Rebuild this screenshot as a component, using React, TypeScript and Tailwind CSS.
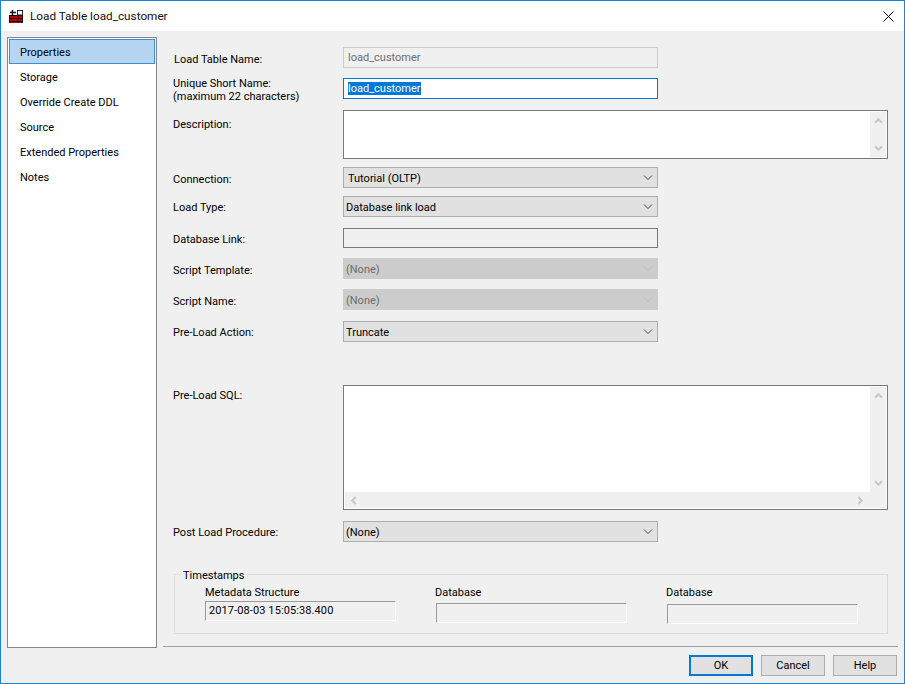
import React from 'react'

const navItems = ['Storage', 'Override Create DDL', 'Source', 'Extended Properties', 'Notes']

function Chevron({ className, dir = 'down', thick }: { className: string; dir?: 'up' | 'down' | 'left' | 'right'; thick?: boolean }) {
  const points = {
    down: '1,1.5 5,5.5 9,1.5',
    up: '1,5.5 5,1.5 9,5.5',
    left: '5.5,1 1.5,5 5.5,9',
    right: '1.5,1 5.5,5 1.5,9',
  }[dir]
  const box = dir === 'up' || dir === 'down' ? '0 0 10 7' : '0 0 7 10'
  return (
    <svg viewBox={box} className={className} fill="none" stroke="currentColor" strokeWidth={thick ? 2.4 : 1}>
      <polyline points={points} />
    </svg>
  )
}

function Combo({ value, disabled, inset }: { value: string; disabled?: boolean; inset?: boolean }) {
  return (
    <div
      className={
        disabled
          ? 'flex h-[21px] w-[315px] items-center justify-between border border-[#cccccc] bg-[#cccccc] pl-[2px] pr-[3px] text-[#6d6d6d]'
          : 'flex h-[21px] w-[315px] items-center justify-between border border-[#adadad] bg-[#e1e1e1] pl-[2px] pr-[3px]'
      }
    >
      <span className={inset ? 'pl-[2px] pt-[2px]' : 'pt-[2px]'}>{value}</span>
      <Chevron
        dir="down"
        className={disabled ? 'mr-[1px] h-[7px] w-[10px] text-[#bfbfbf]' : 'mr-[1px] h-[7px] w-[10px] text-[#444444]'}
      />
    </div>
  )
}

function VScroll() {
  return (
    <div className="flex w-[16px] flex-col items-center justify-between bg-[#f0f0f0] py-[6px]">
      <Chevron dir="up" thick className="h-[6px] w-[9px] text-[#c8c8c8]" />
      <Chevron dir="down" thick className="h-[6px] w-[9px] text-[#c8c8c8]" />
    </div>
  )
}

export default function App() {
  return (
    <div className="flex h-[684px] w-[905px] flex-col border border-[#1883d7] bg-[#f0f0f0] text-[11px] leading-[16px] text-black [font-family:Roboto,sans-serif]">
      {/* Title bar */}
      <div className="flex h-[30px] items-center bg-white pl-[8px] pr-[10px]">
        <svg viewBox="0 0 14 14" className="h-[14px] w-[14px]">
          <rect x="0" y="6" width="14" height="8" fill="#c00000" />
          <path d="M0 6.5H14M0 9.5H14M0 12.5H14M.5 6V14M4.5 6V14M9 6V14M13.5 6V14" stroke="#200000" strokeWidth="1" />
          <rect x="8.5" y="1.5" width="5" height="4.5" fill="#fff" stroke="#222" />
          <path d="M1 3.5H7M3.5 1V6" stroke="#111" strokeWidth="1.6" />
        </svg>
        <span className="ml-[7px] text-[11.75px] text-[#111]">Load Table load_customer</span>
        <svg viewBox="0 0 11 11" className="ml-auto h-[11px] w-[11px] text-black" fill="none" stroke="currentColor">
          <path d="M.5 .5L10.5 10.5M10.5 .5L.5 10.5" />
        </svg>
      </div>

      <div className="flex flex-1 pl-[6px]">
        {/* Left nav */}
        <div className="mb-[35px] mt-[6px] flex w-[150px] flex-col border border-[#828790] bg-white p-[1px]">
          <div className="flex h-[25px] items-center border border-[#3d8fd1] bg-[#b5d5f2] pl-[10px] pt-[2px]">Properties</div>
          {navItems.map((item) => (
            <div key={item} className="flex h-[25px] items-center pl-[11px] pt-[2px]">
              {item}
            </div>
          ))}
        </div>

        {/* Form */}
        <div className="ml-[6px] flex w-[735px] flex-col pt-[16px]">
          <div className="flex pl-[10px]">
            <div className="w-[170px] pl-[1px] pt-[5px]">Load Table Name:</div>
            <div className="flex h-[21px] w-[315px] items-center border border-[#cccccc] pl-[4px] text-[#6d6d6d]">load_customer</div>
          </div>
          <div className="mt-[10px] flex h-[21px] pl-[10px]">
            <div className="-mt-[1px] w-[170px] leading-[13px]">
              Unique Short Name:
              <br />
              (maximum 22 characters)
            </div>
            <div className="flex h-[21px] w-[315px] items-center border border-[#0078d7] bg-white pl-[4px]">
              <span className="bg-[#0078d7] leading-[13px] text-white">load_customer</span>
            </div>
          </div>
          <div className="mt-[11px] flex pl-[10px]">
            <div className="w-[170px] pt-[7px]">Description:</div>
            <div className="flex h-[49px] w-[545px] justify-end border border-[#7a7a7a] bg-white p-[1px]">
              <VScroll />
            </div>
          </div>
          <div className="mt-[8px] flex items-center pl-[10px]">
            <div className="w-[170px] pt-[4px]">Connection:</div>
            <Combo value="Tutorial (OLTP)" inset />
          </div>
          <div className="mt-[8px] flex items-center pl-[10px]">
            <div className="w-[170px] pt-[2px]">Load Type:</div>
            <Combo value="Database link load" />
          </div>
          <div className="mt-[11px] flex items-center pl-[10px]">
            <div className="w-[170px] pt-[4px]">Database Link:</div>
            <div className="h-[20px] w-[315px] border border-[#7a7a7a]" />
          </div>
          <div className="mt-[10px] flex items-center pl-[10px]">
            <div className="w-[170px] pt-[4px]">Script Template:</div>
            <Combo value="(None)" disabled />
          </div>
          <div className="mt-[10px] flex items-center pl-[10px]">
            <div className="w-[170px] pt-[4px]">Script Name:</div>
            <Combo value="(None)" disabled />
          </div>
          <div className="mt-[11px] flex items-center pl-[10px]">
            <div className="w-[170px] pt-[2px]">Pre-Load Action:</div>
            <Combo value="Truncate" />
          </div>
          <div className="mt-[43px] flex pl-[10px]">
            <div className="w-[170px] pt-[3px]">Pre-Load SQL:</div>
            <div className="flex h-[125px] w-[545px] flex-col border border-[#7a7a7a] bg-white p-[1px]">
              <div className="flex flex-1 justify-end">
                <VScroll />
              </div>
              <div className="flex h-[16px] items-center justify-between bg-[#f0f0f0] pl-[6px] pr-[23px]">
                <Chevron dir="left" thick className="h-[9px] w-[6px] text-[#c8c8c8]" />
                <Chevron dir="right" thick className="h-[9px] w-[6px] text-[#c8c8c8]" />
              </div>
            </div>
          </div>
          <div className="mt-[11px] flex items-center pl-[10px]">
            <div className="w-[170px] pt-[2px]">Post Load Procedure:</div>
            <Combo value="(None)" />
          </div>

          {/* Timestamps group */}
          <div className="relative ml-[11px] mt-[32px] flex h-[60px] w-[714px] gap-[40px] border border-[#dcdcdc] pl-[30px] pt-[9px]">
            <span className="absolute -top-[7px] left-[6px] bg-[#f0f0f0] px-[2px] leading-[15px]">Timestamps</span>
            <div className="flex w-[191px] flex-col">
              <div className="h-[17px] pt-[1px]">Metadata Structure</div>
              <div className="flex h-[20px] items-center border border-[#999999] border-b-white border-r-white pl-[3px] tracking-[0.1px]">
                2017-08-03 15:05:38.400
              </div>
            </div>
            <div className="flex w-[191px] flex-col">
              <div className="-ml-[1px] h-[19px] pt-[1px]">Database</div>
              <div className="h-[20px] border border-[#999999] border-b-white border-r-white" />
            </div>
            <div className="flex w-[191px] flex-col">
              <div className="-ml-[1px] h-[20px] pt-[1px]">Database</div>
              <div className="h-[20px] border border-[#999999] border-b-white border-r-white" />
            </div>
          </div>

          <div className="mt-[12px] h-[1px] bg-[#a0a0a0]" />

          {/* Buttons */}
          <div className="mt-[8px] flex justify-end gap-[8px] pr-[1px]">
            <button className="h-[21px] w-[64px] border-2 border-[#0078d7] bg-[#e1e1e1]">OK</button>
            <button className="h-[21px] w-[64px] border border-[#adadad] bg-[#e1e1e1]">Cancel</button>
            <button className="h-[21px] w-[64px] border border-[#adadad] bg-[#e1e1e1]">Help</button>
          </div>
        </div>
      </div>
    </div>
  )
}
